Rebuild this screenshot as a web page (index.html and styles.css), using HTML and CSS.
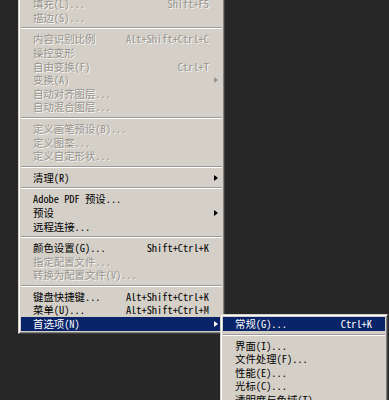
FILE: index.html
```html
<!DOCTYPE html>
<html lang="zh-CN">
<head>
<meta charset="utf-8">
<title>编辑菜单</title>
<link rel="stylesheet" href="styles.css">
</head>
<body>
<div class="screen">
  <div class="menu">
    <div class="item disabled"><span class="label">填充(L)...</span><span class="key">Shift+F5</span><span class="sub"></span></div>
    <div class="item disabled"><span class="label">描边(S)...</span><span class="key"></span><span class="sub"></span></div>
    <div class="sep"></div>
    <div class="item disabled"><span class="label">内容识别比例</span><span class="key">Alt+Shift+Ctrl+C</span><span class="sub"></span></div>
    <div class="item disabled"><span class="label">操控变形</span><span class="key"></span><span class="sub"></span></div>
    <div class="item disabled"><span class="label">自由变换(F)</span><span class="key">Ctrl+T</span><span class="sub"></span></div>
    <div class="item disabled"><span class="label">变换(A)</span><span class="key"></span><span class="sub"><i class="arrow"></i></span></div>
    <div class="item disabled"><span class="label">自动对齐图层...</span><span class="key"></span><span class="sub"></span></div>
    <div class="item disabled"><span class="label">自动混合图层...</span><span class="key"></span><span class="sub"></span></div>
    <div class="sep"></div>
    <div class="item disabled"><span class="label">定义画笔预设(B)...</span><span class="key"></span><span class="sub"></span></div>
    <div class="item disabled"><span class="label">定义图案...</span><span class="key"></span><span class="sub"></span></div>
    <div class="item disabled"><span class="label">定义自定形状...</span><span class="key"></span><span class="sub"></span></div>
    <div class="sep"></div>
    <div class="item"><span class="label">清理(R)</span><span class="key"></span><span class="sub"><i class="arrow"></i></span></div>
    <div class="sep"></div>
    <div class="item"><span class="label">Adobe PDF 预设...</span><span class="key"></span><span class="sub"></span></div>
    <div class="item"><span class="label">预设</span><span class="key"></span><span class="sub"><i class="arrow"></i></span></div>
    <div class="item"><span class="label">远程连接...</span><span class="key"></span><span class="sub"></span></div>
    <div class="sep"></div>
    <div class="item"><span class="label">颜色设置(G)...</span><span class="key">Shift+Ctrl+K</span><span class="sub"></span></div>
    <div class="item disabled"><span class="label">指定配置文件...</span><span class="key"></span><span class="sub"></span></div>
    <div class="item disabled"><span class="label">转换为配置文件(V)...</span><span class="key"></span><span class="sub"></span></div>
    <div class="sep"></div>
    <div class="item"><span class="label">键盘快捷键...</span><span class="key">Alt+Shift+Ctrl+K</span><span class="sub"></span></div>
    <div class="item"><span class="label">菜单(U)...</span><span class="key">Alt+Shift+Ctrl+M</span><span class="sub"></span></div>
    <div class="item active has-popup"><span class="label">首选项(N)</span><span class="key"></span><span class="sub"><i class="arrow"></i></span>
      <div class="menu submenu">
        <div class="item active"><span class="label">常规(G)...</span><span class="key">Ctrl+K</span><span class="sub"></span></div>
        <div class="sep"></div>
        <div class="item"><span class="label">界面(I)...</span><span class="key"></span><span class="sub"></span></div>
        <div class="item"><span class="label">文件处理(F)...</span><span class="key"></span><span class="sub"></span></div>
        <div class="item"><span class="label">性能(E)...</span><span class="key"></span><span class="sub"></span></div>
        <div class="item"><span class="label">光标(C)...</span><span class="key"></span><span class="sub"></span></div>
        <div class="item"><span class="label">透明度与色域(T)...</span><span class="key"></span><span class="sub"></span></div>
        <div class="item"><span class="label">单位与标尺(U)...</span><span class="key"></span><span class="sub"></span></div>
        <div class="item"><span class="label">参考线、网格和切片(S)...</span><span class="key"></span><span class="sub"></span></div>
      </div>
    </div>
  </div>
</div>
</body>
</html>
```

FILE: styles.css
```css
html, body {
  margin: 0;
  padding: 0;
}
body {
  width: 389px;
  height: 400px;
  overflow: hidden;
  background: #272727;
  font-family: "Noto Sans Mono CJK SC", "Noto Sans CJK SC", sans-serif;
  font-size: 10.4px;
}
.screen {
  padding-left: 18px;
  height: 400px;
  overflow: hidden;
}
.menu {
  box-sizing: border-box;
  width: 207px;
  margin-top: -5.8px;
  background: #d4d0c8;
  border: 1px solid;
  border-color: #d4d0c8 #404040 #404040 #d4d0c8;
  box-shadow: inset 1px 1px 0 #ffffff, inset -1px -1px 0 #808080;
  padding: 2px;
}
.item {
  display: grid;
  grid-template-columns: 1fr auto 13px;
  align-items: center;
  height: 13.6px;
  line-height: 13.6px;
  padding-left: 12px;
  color: #000;
  white-space: nowrap;
}
.item .label, .item .key {
  display: block;
}
.item .sub {
  display: flex;
  justify-content: center;
  align-items: center;
  height: 13.6px;
}
.arrow {
  display: block;
  width: 0;
  height: 0;
  border-left: 4px solid currentColor;
  border-top: 3.5px solid transparent;
  border-bottom: 3.5px solid transparent;
}
.disabled {
  color: #97948d;
  text-shadow: 1px 1px 0 rgba(255, 255, 255, 0.85);
}
.disabled .arrow {
  border-left-color: #97948d;
}
.active {
  background: #0a246a;
  color: #ffffff;
}
.has-popup {
  position: relative;
}
.sep {
  height: 8px;
  box-sizing: border-box;
  padding: 3px 0;
}
.sep::before {
  content: "";
  display: block;
  height: 1px;
  background: #9d9a93;
  border-bottom: 1px solid #ffffff;
}
.submenu {
  position: absolute;
  top: -3px;
  left: 199px;
  width: 168px;
  margin-top: 0;
  text-shadow: none;
}
.submenu .item {
  color: #000;
}
.submenu .item.active {
  color: #fff;
}
```
